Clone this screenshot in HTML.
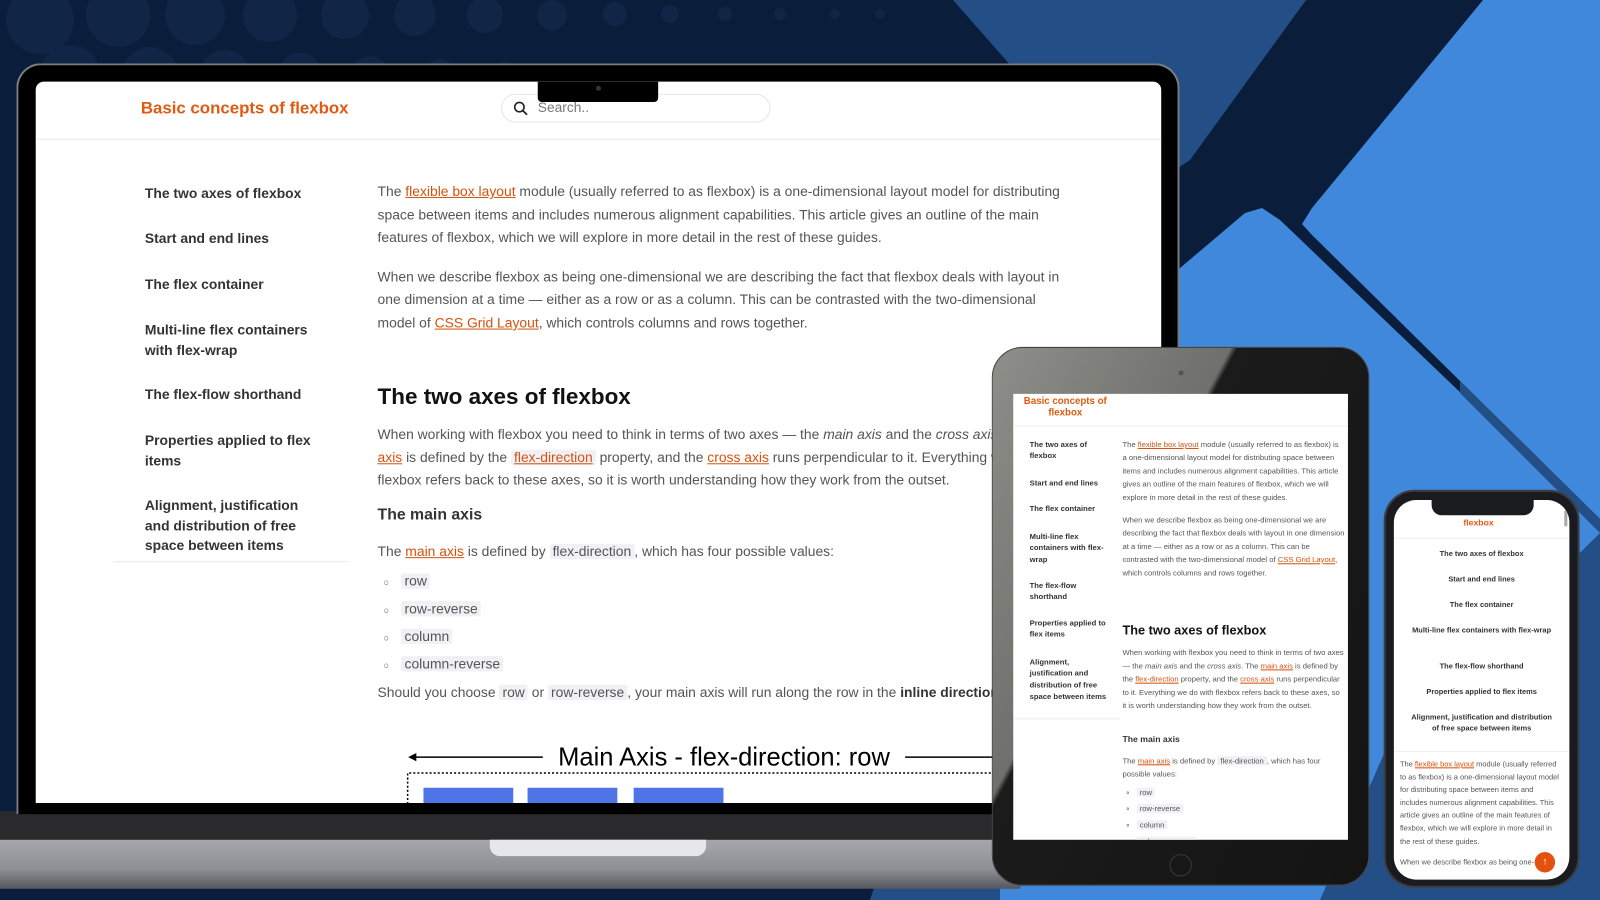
<!DOCTYPE html>
<html><head><meta charset="utf-8">
<style>
*{margin:0;padding:0;box-sizing:border-box}
body{width:1600px;height:900px;overflow:hidden;background:#0a1d3a;font-family:"Liberation Sans",sans-serif;position:relative}
.abs{position:absolute}
.poly{position:absolute;left:0;top:0;width:1600px;height:900px}
#w{position:absolute;left:0;top:0;width:1568px;height:882px;transform:scale(1.0204);transform-origin:0 0}
a{color:#d4520f;text-decoration:underline}
code{font-family:"Liberation Sans",sans-serif;background:#f1f0f5;padding:0 3px;border-radius:2px}
.lap p{font-size:13.6px;line-height:22.6px;color:#555;margin-bottom:16px}
.side div{font-size:13.6px;font-weight:bold;color:#333;line-height:19.5px;position:absolute;left:107px;width:170px}
.tab .sd div{position:absolute;left:16px;width:80px;font-size:7.5px;font-weight:bold;color:#333;line-height:11.3px}
.tab p{font-size:7.5px;line-height:13px;color:#555;margin-bottom:9px}
.ph .nav div{text-align:center;font-size:7.3px;font-weight:bold;color:#333;line-height:11px;position:absolute;left:14px;width:144px}
.li{height:27px;line-height:27px}
</style></head><body>
<svg class="poly" viewBox="0 0 1600 900">
 <g fill="#13294a" opacity="0.8">
  <circle cx="40" cy="20" r="34"/><circle cx="118" cy="15" r="32"/><circle cx="195" cy="15" r="30"/><circle cx="270" cy="15" r="27"/><circle cx="345" cy="15" r="24"/><circle cx="415" cy="15" r="21"/><circle cx="485" cy="15" r="18"/><circle cx="552" cy="15" r="15"/><circle cx="615" cy="14" r="12"/><circle cx="670" cy="14" r="9"/><circle cx="725" cy="14" r="7"/><circle cx="780" cy="14" r="6"/><circle cx="835" cy="14" r="5"/><circle cx="880" cy="14" r="5"/>
  <circle cx="70" cy="75" r="30"/><circle cx="150" cy="75" r="28"/><circle cx="225" cy="75" r="25"/><circle cx="300" cy="75" r="22"/><circle cx="370" cy="75" r="19"/><circle cx="440" cy="75" r="16"/><circle cx="505" cy="75" r="13"/><circle cx="570" cy="75" r="10"/>
 </g>
 <polygon fill="#234f86" points="953,0 1306,0 1190,160 1175,170 1160,165 1050,110"/>
 <polygon fill="#3f88dc" points="1302,224 1312,208 1483,0 1600,0 1600,519 1312,235"/>
 <polygon fill="#3f88dc" points="1160,285 1245,213 1262,208 1280,220 1600,526 1600,900 1000,900 1000,450"/>
 <polygon fill="#234f86" points="1460,381 1600,519 1600,533 1460,393"/>
 <polygon fill="#234f86" points="1390,740 1600,533 1600,900 1320,900"/>
 <polygon fill="#234f86" points="880,870 1000,870 1000,900 870,900"/>
</svg>

<div id="w">
<!-- laptop -->
<div class="abs" style="left:0;top:795px;width:1000px;height:28px;background:#2a2a2c"></div>
<div class="abs" style="left:0;top:823px;width:1000px;height:48px;background:linear-gradient(#a5a7ad,#8d8f95 60%,#55575d)"></div>
<div class="abs" style="left:480px;top:823px;width:212px;height:16px;background:#e6e7ea;border-radius:0 0 10px 10px"></div>
<div class="abs" style="left:16px;top:62px;width:1140px;height:736px;background:#000;border-radius:24px 24px 0 0;border:2px solid #7a7c80;border-bottom:none"></div>
<div class="abs lap" style="left:35px;top:80px;width:1103px;height:707px;background:#fff;overflow:hidden;border-radius:8px 8px 0 0">
 <div class="abs" style="left:103px;top:17px;font-size:16.5px;font-weight:bold;color:#e05a12">Basic concepts of flexbox</div>
 <div class="abs" style="left:456px;top:12px;width:264px;height:28px;border:1px solid #e6e6e6;border-radius:14px"></div>
 <svg class="abs" style="left:468px;top:19px" width="15" height="15" viewBox="0 0 15 15"><circle cx="6" cy="6" r="4.6" fill="none" stroke="#222" stroke-width="1.6"/><path d="M9.5 9.5L13.5 13.5" stroke="#222" stroke-width="1.7"/></svg>
 <div class="abs" style="left:492px;top:18px;font-size:13.5px;color:#777">Search..</div>
 <div class="abs" style="left:492px;top:0;width:118px;height:20px;background:#000;border-radius:0 0 4px 4px"></div>
 <div class="abs" style="left:549px;top:4px;width:5px;height:5px;border-radius:50%;background:#333"></div>
 <div class="abs" style="left:0;top:56px;width:1103px;height:1px;background:#ececec"></div>
 <div class="side">
  <div style="top:100px">The two axes of flexbox</div>
  <div style="top:144px">Start and end lines</div>
  <div style="top:189px">The flex container</div>
  <div style="top:234px">Multi-line flex containers with flex-wrap</div>
  <div style="top:297px">The flex-flow shorthand</div>
  <div style="top:342px">Properties applied to flex items</div>
  <div style="top:406px">Alignment, justification and distribution of free space between items</div>
  <div style="top:470px;left:76px;width:230px;height:1px;background:#e8e8e8"></div>
 </div>
 <div class="abs" style="left:335px;top:97px;width:675px">
  <p>The <a>flexible box layout</a> module (usually referred to as flexbox) is a one-dimensional layout model for distributing space between items and includes numerous alignment capabilities. This article gives an outline of the main features of flexbox, which we will explore in more detail in the rest of these guides.</p>
  <p>When we describe flexbox as being one-dimensional we are describing the fact that flexbox deals with layout in one dimension at a time — either as a row or as a column. This can be contrasted with the two-dimensional model of <a>CSS Grid Layout</a>, which controls columns and rows together.</p>
 </div>
 <div class="abs" style="left:335px;top:296px;font-size:22px;font-weight:bold;color:#111">The two axes of flexbox</div>
 <div class="abs" style="left:335px;top:335px;width:720px">
  <p style="white-space:nowrap">When working with flexbox you need to think in terms of two axes — the <i>main axis</i> and the <i>cross axis</i>. The main<br><a>axis</a> is defined by the <code><a>flex-direction</a></code> property, and the <a>cross axis</a> runs perpendicular to it. Everything we do with<br>flexbox refers back to these axes, so it is worth understanding how they work from the outset.</p>
 </div>
 <div class="abs" style="left:335px;top:416px;font-size:15.5px;font-weight:bold;color:#333">The main axis</div>
 <div class="abs" style="left:335px;top:450px;width:700px"><p>The <a>main axis</a> is defined by <code>flex-direction</code>, which has four possible values:</p></div>
 <div class="abs" style="left:335px;top:476px;font-size:13.6px;color:#555">
  <div class="li"><span style="font-size:9px;margin:0 12px 0 6px">○</span><code>row</code></div>
  <div class="li"><span style="font-size:9px;margin:0 12px 0 6px">○</span><code>row-reverse</code></div>
  <div class="li"><span style="font-size:9px;margin:0 12px 0 6px">○</span><code>column</code></div>
  <div class="li"><span style="font-size:9px;margin:0 12px 0 6px">○</span><code>column-reverse</code></div>
 </div>
 <div class="abs" style="left:335px;top:591px;font-size:13.6px;color:#555;white-space:nowrap">Should you choose <code>row</code> or <code>row-reverse</code>, your main axis will run along the row in the <b style="color:#333">inline direction</b>.</div>
 <svg class="abs" style="left:360px;top:648px" width="620" height="60"><path d="M12 14H137" stroke="#000" stroke-width="1.5"/><path d="M5 14L13 10V18Z" fill="#000"/><path d="M492 14H620" stroke="#000" stroke-width="1.5"/><path d="M4.5 60V29.5H620" stroke="#000" stroke-width="1.5" stroke-dasharray="2 2" fill="none"/></svg>
 <div class="abs" style="left:512px;top:648px;font-family:'Liberation Sans Narrow','Liberation Sans',sans-serif;font-size:25px;color:#000">Main Axis - flex-direction: row</div>
 <div class="abs" style="left:380px;top:692px;width:88px;height:20px;background:#4f74e8"></div>
 <div class="abs" style="left:482px;top:692px;width:88px;height:20px;background:#4f74e8"></div>
 <div class="abs" style="left:586px;top:692px;width:88px;height:20px;background:#4f74e8"></div>
</div>

<!-- tablet -->
<div class="abs" style="left:972px;top:340px;width:370px;height:528px;border-radius:30px;background:linear-gradient(118deg,#8f8f8a 0%,#6f6f6b 36%,#1b1b1b 37%,#141414 100%);border:1px solid #444"></div>
<div class="abs" style="left:1155px;top:363px;width:5px;height:5px;border-radius:50%;background:#555"></div>
<div class="abs" style="left:1146px;top:837px;width:22px;height:22px;border-radius:50%;border:1.5px solid #3a3a3a"></div>
<div class="abs tab" style="left:993px;top:386px;width:328px;height:437px;background:#fff;overflow:hidden">
 <div class="abs" style="left:8px;top:3px;width:86px;text-align:center;font-size:9.5px;font-weight:bold;color:#e05a12;line-height:10.5px">Basic concepts of flexbox</div>
 <div class="abs" style="left:0;top:31px;width:328px;height:1px;background:#eee"></div>
 <div class="sd">
  <div style="top:44px">The two axes of flexbox</div>
  <div style="top:82px">Start and end lines</div>
  <div style="top:107px">The flex container</div>
  <div style="top:134px">Multi-line flex containers with flex-wrap</div>
  <div style="top:182px">The flex-flow shorthand</div>
  <div style="top:219px">Properties applied to flex items</div>
  <div style="top:257px">Alignment, justification and distribution of free space between items</div>
  <div style="top:318px;left:0;width:105px;height:1px;background:#eee"></div>
 </div>
 <div class="abs" style="left:107px;top:43px;width:218px">
  <p>The <a>flexible box layout</a> module (usually referred to as flexbox) is a one-dimensional layout model for distributing space between items and includes numerous alignment capabilities. This article gives an outline of the main features of flexbox, which we will explore in more detail in the rest of these guides.</p>
  <p>When we describe flexbox as being one-dimensional we are describing the fact that flexbox deals with layout in one dimension at a time — either as a row or as a column. This can be contrasted with the two-dimensional model of <a>CSS Grid Layout</a>, which controls columns and rows together.</p>
 </div>
 <div class="abs" style="left:107px;top:225px;font-size:12.5px;font-weight:bold;color:#111">The two axes of flexbox</div>
 <div class="abs" style="left:107px;top:247px;width:218px">
  <p>When working with flexbox you need to think in terms of two axes — the <i>main axis</i> and the <i>cross axis</i>. The <a>main axis</a> is defined by the <a>flex-direction</a> property, and the <a>cross axis</a> runs perpendicular to it. Everything we do with flexbox refers back to these axes, so it is worth understanding how they work from the outset.</p>
 </div>
 <div class="abs" style="left:107px;top:333px;font-size:8.5px;font-weight:bold;color:#333">The main axis</div>
 <div class="abs" style="left:107px;top:353px;width:218px"><p>The <a>main axis</a> is defined by <code>flex-direction</code>, which has four possible values:</p></div>
 <div class="abs" style="left:110px;top:383px;font-size:7.5px;color:#555;line-height:16px">
  <div>∘ &nbsp; <code>row</code></div><div>∘ &nbsp; <code>row-reverse</code></div><div>∘ &nbsp; <code>column</code></div><div>∘ &nbsp; <code>column-reverse</code></div>
 </div>
</div>

<!-- phone -->
<div class="abs" style="left:1356px;top:480px;width:192px;height:390px;border-radius:30px;background:#1a1b1e;border:2px solid #3c3d42"></div>
<div class="abs ph" style="left:1366px;top:490px;width:172px;height:372px;background:#fff;overflow:hidden;border-radius:22px">
 <div class="abs" style="left:0;top:17px;width:166px;text-align:center;font-size:8.5px;font-weight:bold;color:#e05a12">flexbox</div>
 <div class="abs" style="left:37px;top:0;width:100px;height:15px;background:#1a1b1e;border-radius:0 0 10px 10px"></div>
 <div class="abs" style="left:167px;top:10px;width:3px;height:16px;background:#aaa;border-radius:2px"></div>
 <div class="abs" style="left:0;top:37px;width:172px;height:1px;background:#eee"></div>
 <div class="nav">
  <div style="top:47px">The two axes of flexbox</div>
  <div style="top:72px">Start and end lines</div>
  <div style="top:97px">The flex container</div>
  <div style="top:122px">Multi-line flex containers with flex-wrap</div>
  <div style="top:157px">The flex-flow shorthand</div>
  <div style="top:182px">Properties applied to flex items</div>
  <div style="top:207px">Alignment, justification and distribution of free space between items</div>
  <div style="top:246px;left:0;width:172px;height:1px;background:#eee"></div>
 </div>
 <div class="abs" style="left:6px;top:253px;width:158px;font-size:7.3px;line-height:12.6px;color:#555">The <a>flexible box layout</a> module (usually referred to as flexbox) is a one-dimensional layout model for distributing space between items and includes numerous alignment capabilities. This article gives an outline of the main features of flexbox, which we will explore in more detail in the rest of these guides.<br><span style="display:block;margin-top:8px">When we describe flexbox as being one-</span></div>
 <div class="abs" style="left:138px;top:345px;width:20px;height:20px;border-radius:50%;background:#e2520d;color:#fff;font-size:10px;text-align:center;line-height:20px">↑</div>
</div>
</div>
</body></html>
